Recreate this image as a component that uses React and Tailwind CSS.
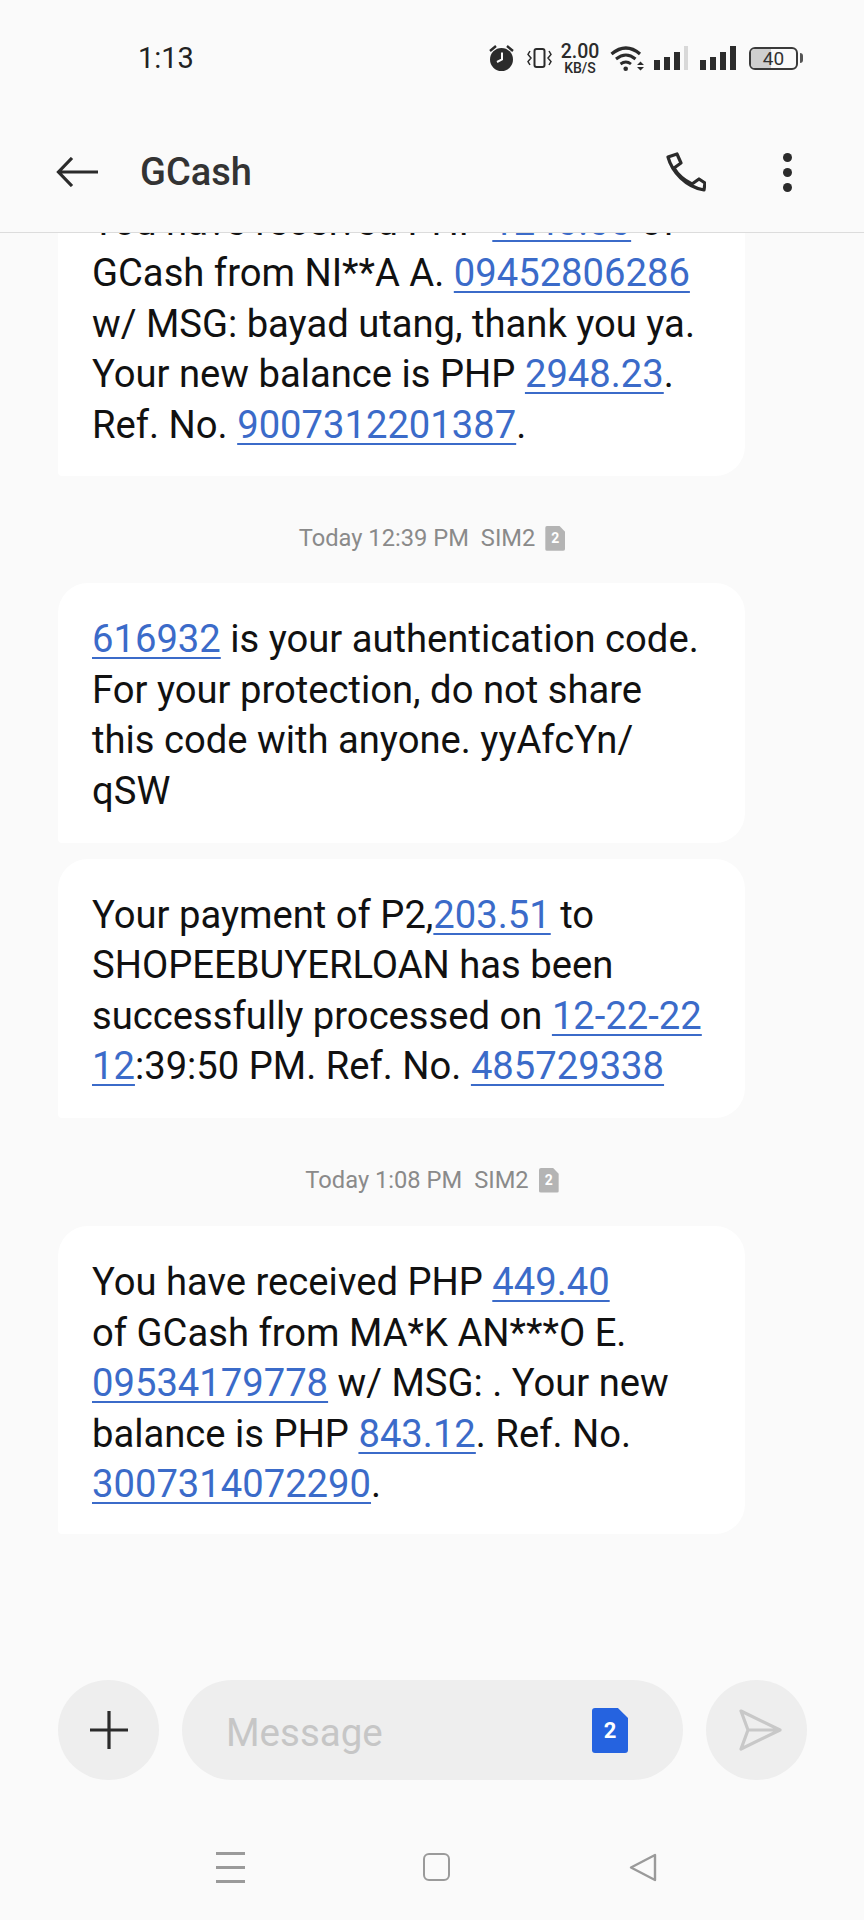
import React from 'react';

const L = ({ children }) => (
  <span className="text-[#3b6bc9] underline decoration-2 underline-offset-[5px]">{children}</span>
);

const Bubble = ({ children, className = '' }) => (
  <div className={`ml-[58px] w-[687px] shrink-0 bg-white rounded-t-[30px] rounded-br-[30px] rounded-bl-[4px] pl-[34px] whitespace-nowrap text-[38.2px] leading-[50.6px] text-[#111] ${className}`}>
    {children}
  </div>
);

const Stamp = ({ time, className = '' }) => (
  <div className={`flex items-center justify-center text-[23.7px] leading-[28px] text-[#8a8a8a] ${className}`}>
    <span>{time}</span>
    <span className="ml-[12px]">SIM2</span>
    <span className="ml-[10px] flex h-[25px] w-[20px] items-center justify-center rounded-[2px] bg-[#b4b4b4] text-[14px] font-bold leading-none text-white [clip-path:polygon(0_0,70%_0,100%_25%,100%_100%,0_100%)]">2</span>
  </div>
);

const Bars = ({ last }) => (
  <div className="flex h-[24px] items-end gap-[4px]">
    <span className="h-[10px] w-[6px] bg-[#2b2b2b]" />
    <span className="h-[13px] w-[6px] bg-[#2b2b2b]" />
    <span className="h-[18px] w-[6px] bg-[#2b2b2b]" />
    {last}
  </div>
);

const StatusIcons = () => (
  <div className="flex items-center text-[#2b2b2b]">
    <svg width="25" height="26" viewBox="0 0 25 26">
      <circle cx="12.500" cy="14.500" r="11.500" fill="#2b2b2b" />
      <path d="M13 7.500V14.500L8 17" stroke="#fafafa" strokeWidth="2" fill="none" />
      <path d="M1 6l6-5M24 6l-6-5" stroke="#2b2b2b" strokeWidth="2.400" />
    </svg>
    <svg width="25" height="20" viewBox="0 0 25 20" fill="none" stroke="#2b2b2b" className="ml-[13px]">
      <rect x="7.500" y="1" width="10" height="18" rx="2" strokeWidth="2" />
      <path d="M3 3L1 6.500l3 3.500-3 3.500 2 3.500M22 3l2 3.500-3 3.500 3 3.500-2 3.500" strokeWidth="1.500" />
    </svg>
    <div className="ml-[8px] flex w-[40px] flex-col items-center gap-[4px] pt-[2px]">
      <span className="text-[19.5px] font-medium leading-[14px]">2.00</span>
      <span className="text-[14px] font-medium leading-[11px]">KB/S</span>
    </div>
    <svg width="34" height="26" viewBox="0 0 34 26" fill="none" stroke="#2b2b2b" className="ml-[10px]">
      <path d="M1.500 9Q16-3 30 9" strokeWidth="3.200" />
      <path d="M6 14Q16 6 25.500 14" strokeWidth="3" />
      <path d="M10.500 19Q16 15 21 19" strokeWidth="2.800" />
      <circle cx="15.700" cy="23.700" r="2.300" fill="#2b2b2b" stroke="none" />
      <path d="M27 20l3.500-3.500L34 20zM27 22l3.500 3.500L34 22z" fill="#2b2b2b" stroke="none" />
    </svg>
    <div className="ml-[10px]">
      <Bars last={<span className="h-[24px] w-[4px] bg-[#d8d8d8]" />} />
    </div>
    <div className="ml-[12px]">
      <Bars last={<span className="h-[24px] w-[6px] bg-[#2b2b2b]" />} />
    </div>
    <div className="relative ml-[13px] h-[23px] w-[49px] overflow-hidden rounded-[6px] border-2 border-[#3a3a3a]">
      <div className="h-full w-[20px] bg-[#cfcfcf]" />
      <span className="absolute inset-0 flex items-center justify-center text-[19px] leading-none text-[#333]">40</span>
    </div>
    <span className="ml-[2px] h-[10px] w-[3px] rounded-r bg-[#555]" />
  </div>
);

export default function App() {
  return (
    <div className="flex h-[1920px] w-[864px] flex-col overflow-hidden bg-[#fafafa] font-['Roboto',sans-serif]">
      <div className="relative z-10 flex h-[233px] shrink-0 flex-col border-b border-[#dcdcdc] bg-[#fafafa]">
        <div className="flex h-[116px] items-center justify-between pl-[138px] pr-[61px]">
          <span className="text-[29px] leading-none text-[#222]">1:13</span>
          <StatusIcons />
        </div>
        <div className="flex flex-1 items-center pl-[56px] pr-[72px] pb-[4px]">
          <svg width="42" height="30" viewBox="0 0 42 30" fill="none" stroke="#2b2b2b" strokeWidth="3.200">
            <path d="M42 15H2.500M16 1L2.500 15 16 29" />
          </svg>
          <span className="ml-[42px] text-[38px] font-medium leading-none text-[#333]">GCash</span>
          <svg width="40" height="40" viewBox="0 0 40 40" fill="none" stroke="#2b2b2b" strokeWidth="3.200" strokeLinejoin="round" className="ml-auto mr-[77px]">
            <path d="M2 5C6 20 20 35 38 38L39 31 33 27 26 32C18 28 12 23 8 16L15 11 11 2z" />
          </svg>
          <div className="flex flex-col gap-[6px]">
            <span className="h-[9px] w-[9px] rounded-full bg-[#2b2b2b]" />
            <span className="h-[9px] w-[9px] rounded-full bg-[#2b2b2b]" />
            <span className="h-[9px] w-[9px] rounded-full bg-[#2b2b2b]" />
          </div>
        </div>
      </div>

      <div className="flex flex-1 flex-col justify-end overflow-hidden pb-[146px]">
        <Bubble className="pb-[26px]">
          You have received PHP <L>1240.00</L> of<br />
          GCash from NI**A A. <L>09452806286</L><br />
          w/ MSG: bayad utang, thank you ya.<br />
          Your new balance is PHP <L>2948.23</L>.<br />
          Ref. No. <L>9007312201387</L>.
        </Bubble>
        <Stamp time="Today 12:39 PM" className="mt-[48px] mb-[31px]" />
        <Bubble className="pt-[31px] pb-[26px]">
          <L>616932</L> is your authentication code.<br />
          For your protection, do not share<br />
          this code with anyone. yyAfcYn/<br />
          qSW
        </Bubble>
        <Bubble className="mt-[16px] pt-[31px] pb-[26px]">
          Your payment of P2,<L>203.51</L> to<br />
          SHOPEEBUYERLOAN has been<br />
          successfully processed on <L>12-22-22</L><br />
          <L>12</L>:39:50 PM. Ref. No. <L>485729338</L>
        </Bubble>
        <Stamp time="Today 1:08 PM" className="mt-[48px] mb-[32px]" />
        <Bubble className="pt-[31px] pb-[24px]">
          You have received PHP <L>449.40</L><br />
          of GCash from MA*K AN***O E.<br />
          <L>09534179778</L> w/ MSG: . Your new<br />
          balance is PHP <L>843.12</L>. Ref. No.<br />
          <L>3007314072290</L>.
        </Bubble>
      </div>

      <div className="flex h-[100px] shrink-0 items-center gap-[23px] pl-[58px]">
        <button className="flex h-[100px] w-[101px] items-center justify-center rounded-full bg-[#eeeeee]">
          <svg width="38" height="38" viewBox="0 0 38 38" stroke="#2b2b2b" strokeWidth="3.200"><path d="M19 0v38M0 19h38" /></svg>
        </button>
        <div className="relative flex h-[100px] w-[501px] items-center rounded-full bg-[#eeeeee] pl-[44px] pt-[6px]">
          <span className="text-[38.500px] leading-none text-[#c6c6c6]">Message</span>
          <span className="absolute left-[410px] top-[28px] flex h-[45px] w-[36px] items-center justify-center rounded-[3px] bg-[#2563e0] text-[22px] font-bold leading-none text-white [clip-path:polygon(0_0,72%_0,100%_22%,100%_100%,0_100%)]">2</span>
        </div>
        <button className="flex h-[100px] w-[101px] items-center justify-center rounded-full bg-[#eeeeee] pl-[6px]">
          <svg width="44" height="42" viewBox="0 0 44 42" fill="none" stroke="#c8c8c8" strokeWidth="3.200" strokeLinejoin="round"><path d="M3 2l39 19L3 40l7-19zM10 21h32" /></svg>
        </button>
      </div>

      <div className="flex h-[140px] shrink-0 items-center pt-[34px]">
        <div className="ml-[216px] flex w-[29px] flex-col gap-[11px]">
          <span className="h-[3px] bg-[#9a9a9a]" />
          <span className="h-[3px] bg-[#9a9a9a]" />
          <span className="h-[3px] bg-[#9a9a9a]" />
        </div>
        <div className="ml-[178px] h-[28px] w-[27px] rounded-[6px] border-2 border-[#9a9a9a]" />
        <svg width="28" height="29" viewBox="0 0 28 29" fill="none" stroke="#9a9a9a" strokeWidth="2.400" strokeLinejoin="round" className="ml-[179px]">
          <path d="M26 2v25L2 14.500z" />
        </svg>
      </div>
    </div>
  );
}
